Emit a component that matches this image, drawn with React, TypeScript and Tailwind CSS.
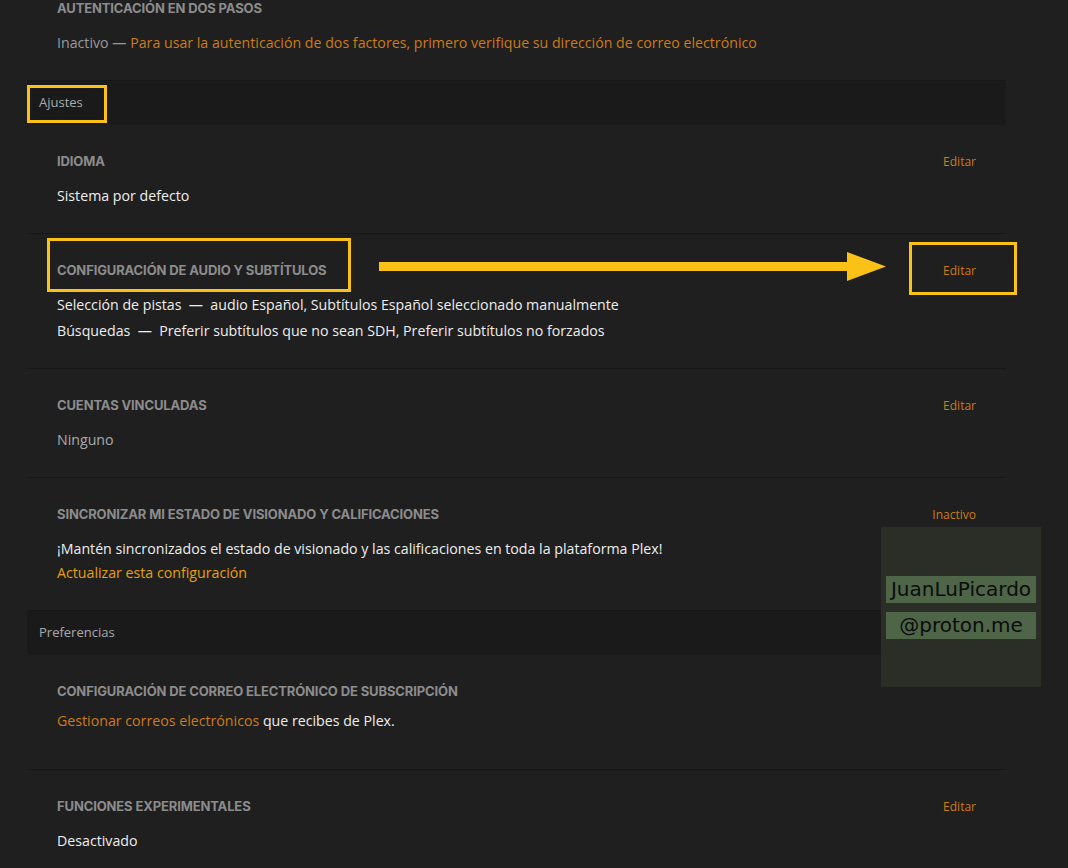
import type { ReactNode } from "react";

const body = { fontFamily: '"Open Sans", "Noto Sans", sans-serif' };
const head = { fontFamily: 'Inter, "Liberation Sans", sans-serif' };

function Row({
  title,
  action,
  children,
  last,
}: {
  title: string;
  action?: string;
  children: ReactNode;
  last?: boolean;
}) {
  return (
    <div className={`pl-[30px] pr-[30px] pt-[29px] pb-[25px] ${last ? "" : "border-b border-[#171717]"}`}>
      <div className="flex items-center justify-between h-4">
        <h3 style={head} className="text-[13px] font-bold tracking-[-0.01em] uppercase text-[#8c8c8c]">
          {title}
        </h3>
        {action && (
          <span style={body} className="text-[12px] text-[#cc7b19]">
            {action}
          </span>
        )}
      </div>
      <div className="mt-[14px] text-[14.2px] leading-[24px]" style={body}>
        {children}
      </div>
    </div>
  );
}

function Band({ label }: { label: string }) {
  return (
    <div className="h-[44px] flex items-center px-3 bg-[#1a1a1a] rounded-sm">
      <span style={body} className="text-[13px] text-[#aaaaaa]">
        {label}
      </span>
    </div>
  );
}

export default function App() {
  return (
    <div className="relative w-[1068px] h-[868px] overflow-hidden bg-[#1f1f1f]">
      <div className="ml-[27px] w-[979px] -mt-[28px]">
        <Row title="Autenticación en dos pasos">
          <p className="text-[#999999]">
            Inactivo —{" "}
            <span className="text-[#cc7b19]">
              Para usar la autenticación de dos factores, primero verifique su dirección de correo electrónico
            </span>
          </p>
        </Row>

        <Band label="Ajustes" />

        <Row title="Idioma" action="Editar">
          <p className="text-[#eeeeee]">Sistema por defecto</p>
        </Row>

        <Row title="Configuración de audio y subtítulos" action="Editar">
          <div className="flex flex-col gap-[2px] text-[#eeeeee]">
            <p>Selección de pistas &nbsp;—&nbsp; audio Español, Subtítulos Español seleccionado manualmente</p>
            <p>Búsquedas &nbsp;—&nbsp; Preferir subtítulos que no sean SDH, Preferir subtítulos no forzados</p>
          </div>
        </Row>

        <Row title="Cuentas vinculadas" action="Editar">
          <p className="text-[#aaaaaa]">Ninguno</p>
        </Row>

        <Row title="Sincronizar mi estado de visionado y calificaciones" action="Inactivo">
          <p className="text-[#eeeeee]">
            ¡Mantén sincronizados el estado de visionado y las calificaciones en toda la plataforma Plex!
          </p>
          <p className="text-[#e5a00d]">Actualizar esta configuración</p>
        </Row>

        <Band label="Preferencias" />

        <div className="pl-[30px] pr-[30px] pt-[29px] pb-[36px] border-b border-[#171717]">
          <div className="flex items-center h-4">
            <h3 style={head} className="text-[13px] font-bold tracking-[-0.01em] uppercase text-[#8c8c8c]">
              Configuración de correo electrónico de subscripción
            </h3>
          </div>
          <p style={body} className="mt-[9px] text-[14.2px] leading-[24px] text-[#eeeeee]">
            <span className="text-[#cc7b19]">Gestionar correos electrónicos</span> que recibes de Plex.
          </p>
        </div>

        <Row title="Funciones experimentales" action="Editar" last>
          <p className="text-[#eeeeee]">Desactivado</p>
        </Row>
      </div>

      {/* annotations */}
      <div className="absolute left-[27px] top-[85px] w-[80px] h-[38px] border-[3px] border-[#fbc117]" />
      <div className="absolute left-[47px] top-[238px] w-[304px] h-[54px] border-[3px] border-[#fbc117]" />
      <div className="absolute left-[909px] top-[242px] w-[108px] h-[53px] border-[3px] border-[#fbc117]" />
      <svg className="absolute left-[379px] top-[250px]" width="508" height="34" viewBox="0 0 508 34">
        <rect x="0" y="12" width="470" height="9" fill="#fbc117" />
        <polygon points="468,2 507,16.5 468,31" fill="#fbc117" />
      </svg>

      {/* watermark */}
      <div className="absolute left-[881px] top-[527px] w-[160px] h-[160px] bg-[#2b2d27] flex flex-col items-center justify-center gap-[9px]">
        <span
          className="w-[150px] h-[27px] bg-[#4e6548] flex items-center justify-center text-[20px] text-[#0c0c0c] leading-none"
          style={{ fontFamily: '"DejaVu Sans", sans-serif' }}
        >
          JuanLuPicardo
        </span>
        <span
          className="w-[150px] h-[27px] bg-[#4e6548] flex items-center justify-center text-[20px] text-[#0c0c0c] leading-none"
          style={{ fontFamily: '"DejaVu Sans", sans-serif' }}
        >
          @proton.me
        </span>
      </div>
    </div>
  );
}
